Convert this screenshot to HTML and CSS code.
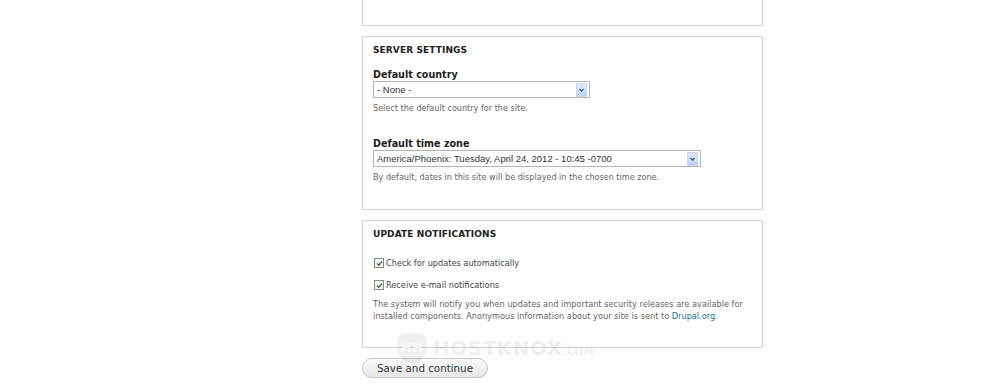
FILE: index.html
```html
<!DOCTYPE html>
<html lang="en">
<head>
    <meta charset="UTF-8">
    <title>Configure site</title>
    <link rel="stylesheet" href="styles.css">
</head>
<body>
    <div class="page">
        <!-- fine del fieldset precedente -->
        <div class="fieldset cut"></div>

        <div class="fieldset server">
            <div class="legend">SERVER SETTINGS</div>
            <div class="label">Default country</div>
            <div class="select short">
                <span class="value">- None -</span>
                <span class="arrow"><svg width="9" height="12" viewBox="0 0 9 12"><path d="M2.5 5 L4.5 7 L6.5 5" fill="none" stroke="#3b5f9a" stroke-width="1.3"/></svg></span>
            </div>
            <div class="desc">Select the default country for the site.</div>

            <div class="label second">Default time zone</div>
            <div class="select long">
                <span class="value">America/Phoenix: Tuesday, April 24, 2012 - 10:45 -0700</span>
                <span class="arrow"><svg width="9" height="12" viewBox="0 0 9 12"><path d="M2.5 5 L4.5 7 L6.5 5" fill="none" stroke="#3b5f9a" stroke-width="1.3"/></svg></span>
            </div>
            <div class="desc">By default, dates in this site will be displayed in the chosen time zone.</div>
        </div>

        <div class="fieldset updates">
            <div class="legend">UPDATE NOTIFICATIONS</div>
            <div class="check first">
                <span class="box"><svg width="9" height="9" viewBox="0 0 9 9"><path d="M2 4.5 L3.8 6.3 L7 2.6" fill="none" stroke="#2f7a2f" stroke-width="1.4"/></svg></span>
                Check for updates automatically
            </div>
            <div class="check">
                <span class="box"><svg width="9" height="9" viewBox="0 0 9 9"><path d="M2 4.5 L3.8 6.3 L7 2.6" fill="none" stroke="#2f7a2f" stroke-width="1.4"/></svg></span>
                Receive e-mail notifications
            </div>
            <div class="desc notice">The system will notify you when updates and important security releases are available for installed components. Anonymous information about your site is sent to <a href="#">Drupal.org</a>.</div>
        </div>

        <button class="btn">Save and continue</button>

        <!-- watermark sopra il contenuto -->
        <div class="watermark"><span class="logo">HH</span>HOSTKNOX<small>.COM</small></div>
    </div>
</body>
</html>
```

FILE: styles.css
```css
body {
    margin: 0;
    background: #fff;
    font-family: 'DejaVu Sans', Verdana, sans-serif;
    color: #333;
}

.page {
    position: relative;
    width: 401px;
    margin-left: 362px;
}

.fieldset {
    border: 1px solid #d4d4d4;
    padding: 7px 10px 25px 10px;
    margin-bottom: 10px;
}

.fieldset.server {
    padding-bottom: 27px;
}

.fieldset.cut {
    border-top: none;
    height: 26px;
    padding: 0;
    box-sizing: border-box;
}

.legend {
    font-size: 9px;
    font-weight: bold;
    line-height: 12px;
    color: #222;
    letter-spacing: 0.1px;
}

.label {
    margin-top: 13px;
    font-size: 9.6px;
    font-weight: bold;
    line-height: 12px;
    color: #222;
}

.label.second {
    margin-top: 25px;
}

.select {
    display: flex;
    align-items: center;
    justify-content: space-between;
    box-sizing: border-box;
    height: 17px;
    margin-top: 0;
    border: 1px solid #b5b5b5;
    background: #fff;
    font-family: 'Liberation Sans', Arial, sans-serif;
    font-size: 9.5px;
    color: #333;
    padding-left: 3px;
}

.select.short {
    width: 217px;
}

.select.long {
    width: 328px;
}

.arrow {
    display: flex;
    width: 9px;
    height: 12px;
    margin-right: 2px;
    background: linear-gradient(#e3ecf9, #bcd0ef);
    border: 1px solid #c9d6ec;
    border-radius: 1px;
}

.desc {
    margin-top: 5px;
    font-size: 8.1px;
    line-height: 10px;
    color: #666;
}

.check {
    display: flex;
    align-items: center;
    margin-top: 10px;
    font-size: 8.2px;
    line-height: 12px;
    color: #444;
}

.check.first {
    margin-top: 17px;
}

.box {
    display: flex;
    width: 8px;
    height: 8px;
    margin: 0 2px 0 1px;
    border: 1px solid #7f8f7f;
    background: #f4f4f4;
    box-sizing: content-box;
}

.box svg {
    margin: -0.5px;
}

.desc.notice {
    margin-top: 7px;
    font-size: 8.2px;
    line-height: 12px;
    color: #666;
}

.desc a {
    color: #1e6e96;
    text-decoration: none;
}

.btn {
    display: block;
    width: 126px;
    height: 20px;
    padding: 0;
    border: 1px solid #c8c8c8;
    border-radius: 10px;
    background: linear-gradient(#fbfbfb, #e6e6e6);
    font-family: 'DejaVu Sans', Verdana, sans-serif;
    font-size: 10.3px;
    color: #333;
    box-shadow: 0 1px 1px rgba(0, 0, 0, 0.08);
}

.watermark {
    position: absolute;
    left: 35px;
    top: 333px;
    display: flex;
    align-items: center;
    font-family: 'DejaVu Sans', Verdana, sans-serif;
    font-weight: bold;
    font-size: 20px;
    color: rgba(150, 150, 150, 0.16);
    letter-spacing: 0.5px;
    pointer-events: none;
}

.watermark small {
    font-size: 10px;
    margin-top: 6px;
}

.logo {
    width: 30px;
    height: 30px;
    margin-right: 6px;
    border-radius: 8px 8px 14px 14px;
    background: rgba(150, 150, 150, 0.14);
    font-size: 13px;
    line-height: 30px;
    text-align: center;
    color: rgba(255, 255, 255, 0.7);
}
```
